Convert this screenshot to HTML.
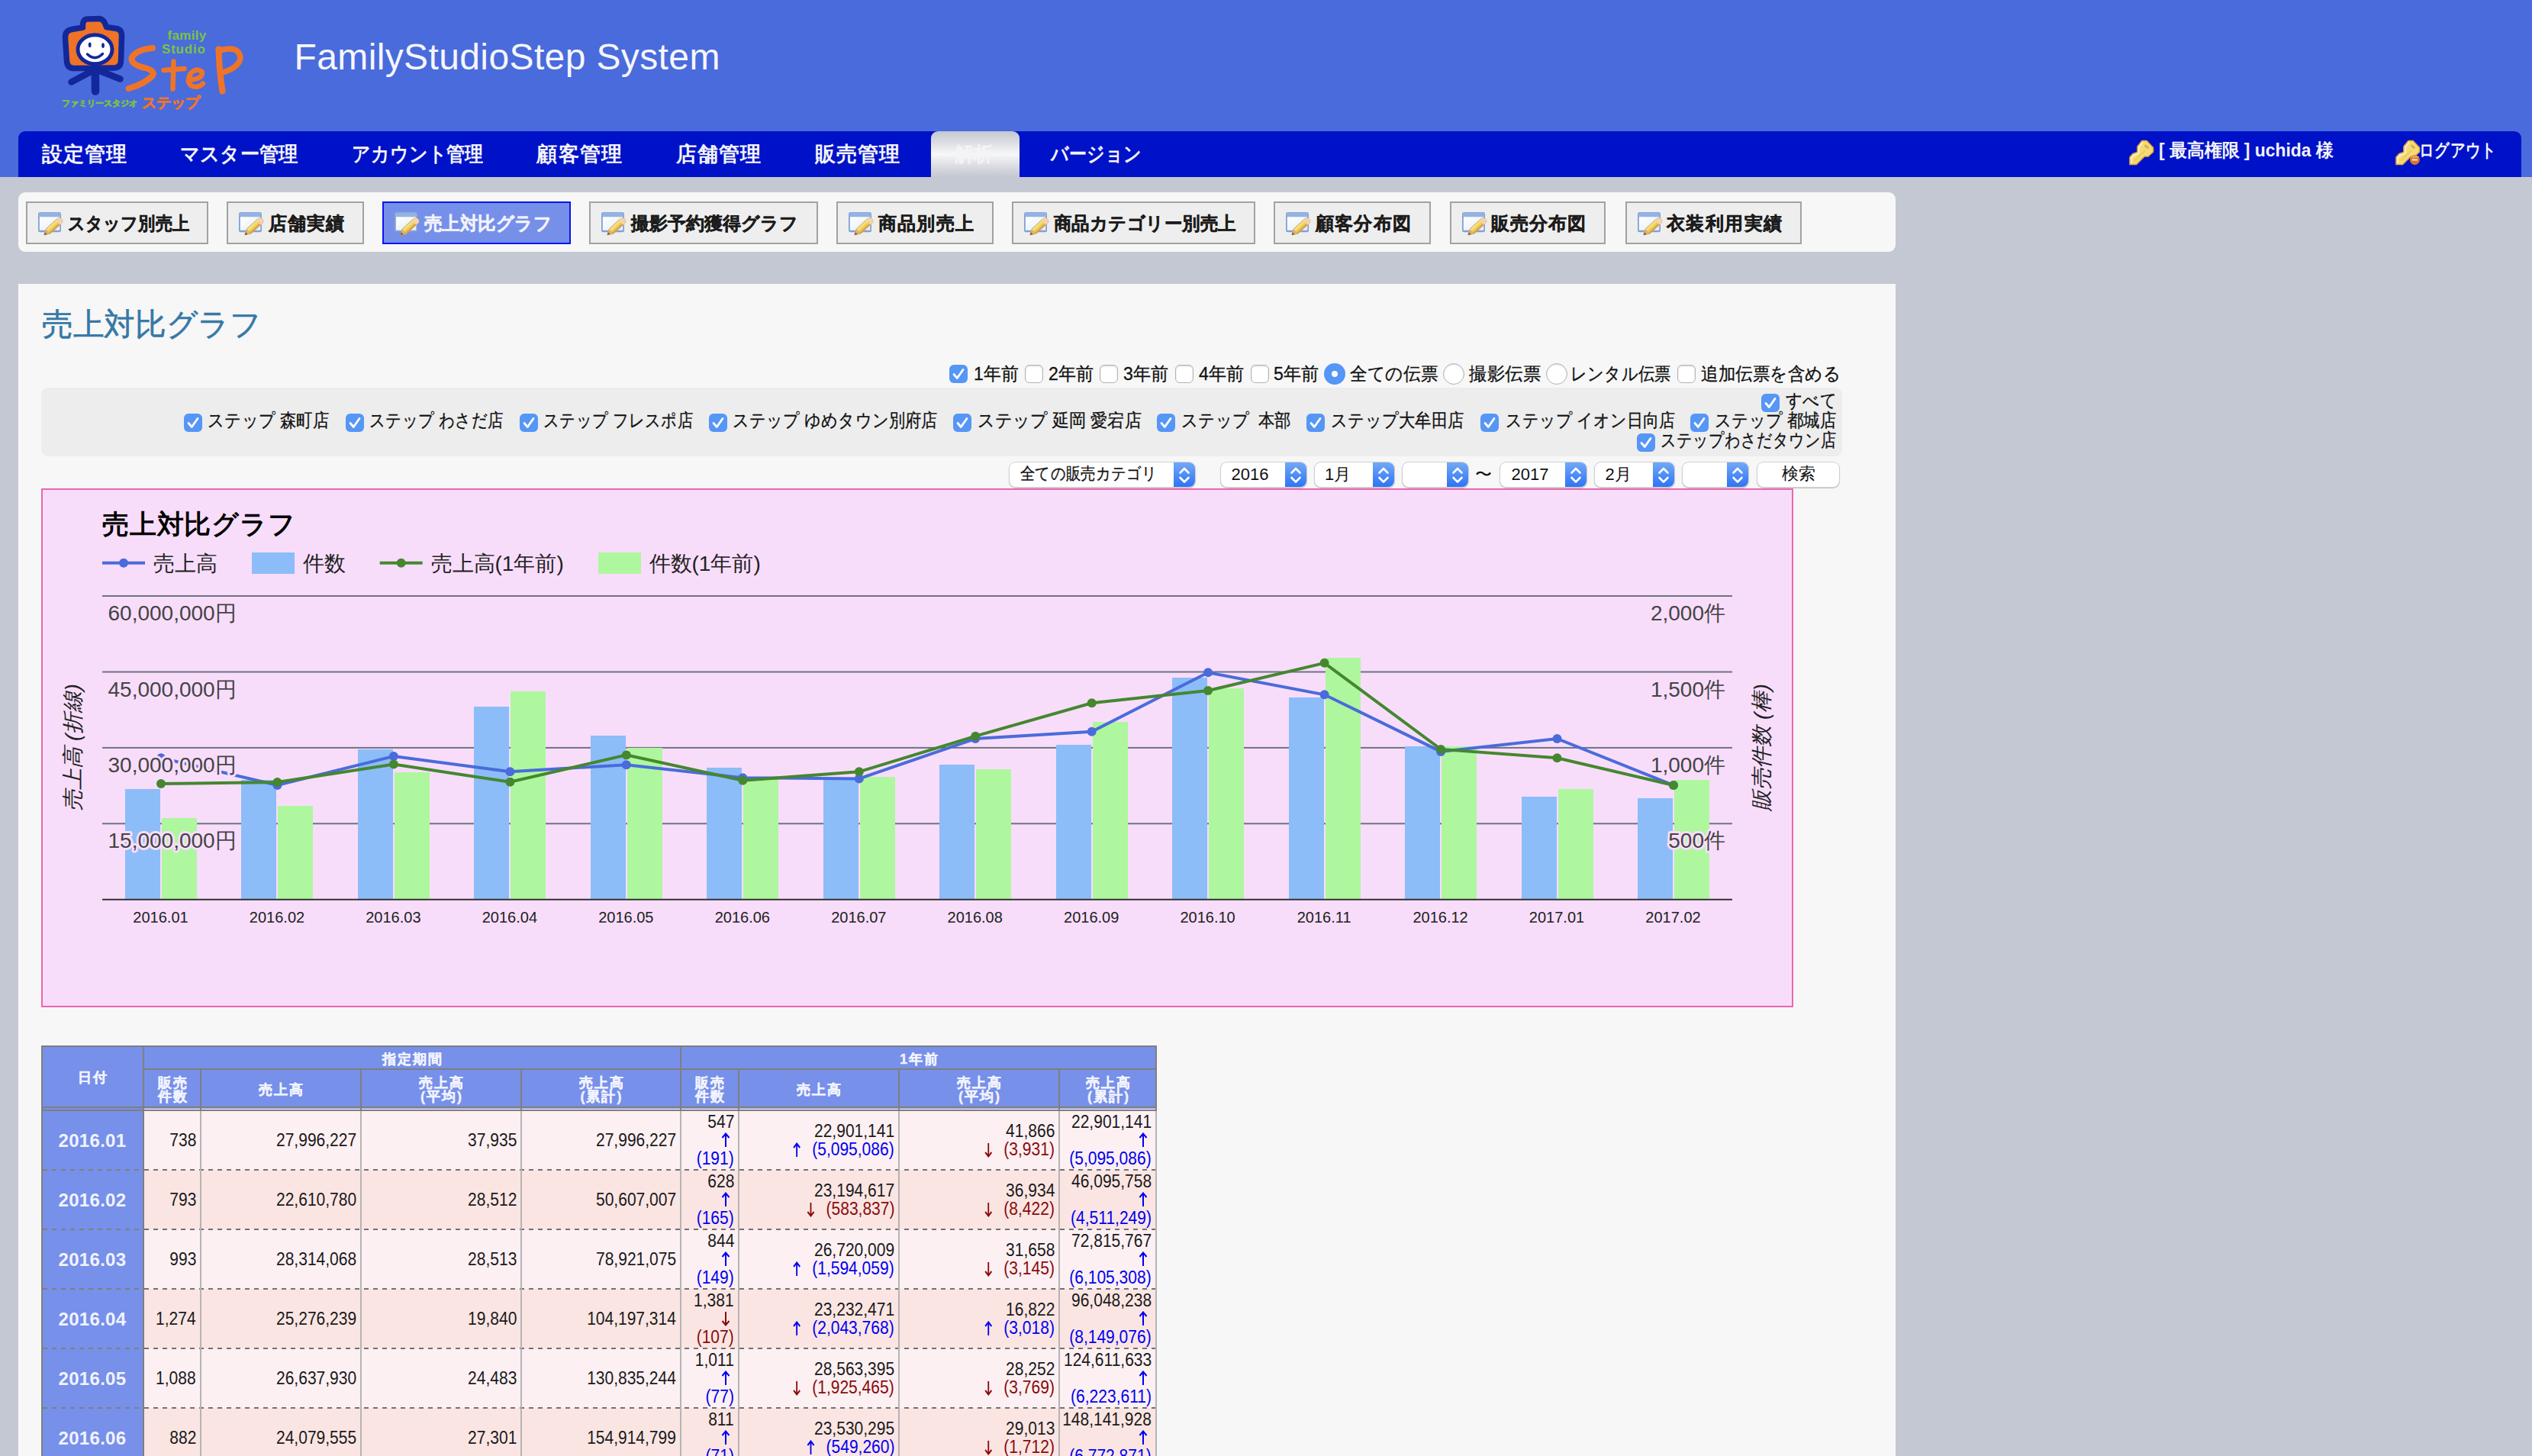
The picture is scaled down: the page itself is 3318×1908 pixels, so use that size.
<!DOCTYPE html>
<html lang="ja"><head><meta charset="utf-8"><title>FamilyStudioStep System</title>
<style>
html,body{margin:0;padding:0}
body{width:3318px;height:1908px;overflow:hidden;background:#c4c8d2;font-family:"Liberation Sans",sans-serif;position:relative}
.t{position:absolute;white-space:nowrap;margin:0;padding:0}
.a{position:absolute}
#hd{left:0;top:0;width:3318px;height:232px;background:#4a6bdc}
#nav{left:24px;top:172px;width:3280px;height:60px;background:#0012c8;border-radius:9px 9px 0 0}
#tab{left:1220px;top:172px;width:116px;height:60px;border-radius:9px 9px 0 0;background:linear-gradient(#c4c8d2 0%,#d9dbe1 22%,#f7f7f7 50%,#d9dbe1 78%,#c4c8d2 100%)}
#sub{left:24px;top:252px;width:2460px;height:78px;background:#f7f7f7;border-radius:9px}
#main{left:24px;top:372px;width:2460px;height:1600px;background:#f7f7f7}
.btn{position:absolute;top:264px;height:52px;box-sizing:content-box;border:2px solid #a2a2a2;background:#eee}
.btn.on{border-color:#0a14f0;background:#7690ea}
.cb{position:absolute;width:24px;height:24px;border-radius:6px;box-sizing:border-box}
.cb.y{background:#5596f6}
.cb.n{background:#fff;border:1px solid #b4b4b4;box-shadow:inset 0 1px 2px rgba(0,0,0,.18)}
.rd{position:absolute;width:28px;height:28px;border-radius:14px;box-sizing:border-box}
.rd.n{background:#fff;border:1px solid #b4b4b4;box-shadow:inset 0 1px 2px rgba(0,0,0,.15)}
.rd.y{background:#5596f6}
.sel{position:absolute;top:605.6px;height:32.8px;border-radius:8px;background:#fff;box-shadow:0 0 0 1px #d0d0d0,0 1px 1px 1px #c4c4c4;overflow:hidden}
.sel i{position:absolute;right:0;top:0;width:28px;height:33px;background:linear-gradient(#72a9f6,#2c72f5)}
#stores{left:54px;top:508px;width:2360px;height:90px;background:#ededed;border-radius:9px}
#chart{left:54px;top:640px;width:2292px;height:676px;border:2px solid #ec66ac;background:#f8ddfb}
</style></head><body>
<div class="a" id="hd"></div>

<svg class="a" style="left:70px;top:10px" width="270" height="145" viewBox="70 10 270 145">
<g fill="none" stroke-linecap="round" stroke-linejoin="round">
<path d="M124.8 90 L125 119.5" stroke="#12279a" stroke-width="10.5"/>
<path d="M119 94 L93.5 107.5" stroke="#12279a" stroke-width="8.5"/>
<path d="M131 93 L157.5 103.5" stroke="#12279a" stroke-width="8.5"/>
<path d="M108.5 36 Q108 25.5 114 25 L131 24.5 Q136 25 139.5 35.5 L153 37.5 Q160 39 159.5 48 L158.5 80 Q158 89.5 148 89 L98 89.5 Q88 90 87.5 80 L85.5 50 Q85 40 94 38.5 Z" fill="#ee7326" stroke="#12279a" stroke-width="7.5"/>
<ellipse cx="124.5" cy="64.8" rx="22.5" ry="19" fill="#fff" stroke="#12279a" stroke-width="5"/>
<path d="M114.5 71 Q124.5 80.5 134.5 70.5" stroke="#12279a" stroke-width="3.4"/>
</g>
<ellipse cx="117.7" cy="58.8" rx="1.9" ry="3.4" fill="#12279a"/><ellipse cx="135" cy="59.6" rx="1.9" ry="3.4" fill="#12279a"/>
<g fill="none" stroke="#f07428" stroke-linecap="round" stroke-linejoin="round">
<path d="M200 63 Q178 65 172.5 76 Q172 85 190 89 Q204 93 200 99 Q190 110 168.5 116" stroke-width="8"/>
<path d="M227.5 80.5 L226.5 116.5" stroke-width="6.5"/><path d="M214.5 92 L241.5 90" stroke-width="6.5"/>
<path d="M250 104.5 Q266 103 265 94.5 Q258 88 250 96 Q243 108 252 113 Q260 115.5 266 109.500" stroke-width="6.5"/>
<path d="M286.5 64.500 Q287.5 95 291.5 119.500" stroke-width="8"/><path d="M286.500 66.500 Q312 58.500 315 75 Q314 88.500 291.500 95" stroke-width="7.500"/>
</g>
</svg>
<div class="t" style="top:37.7px;font-size:17px;line-height:17px;color:#7cc244;font-weight:bold;left:219.5px;letter-spacing:0.3px">family</div>
<div class="t" style="top:55.7px;font-size:17px;line-height:17px;color:#7cc244;font-weight:bold;left:212.0px;letter-spacing:0.8px">Studio</div>
<div class="t" style="top:129.7px;font-size:11.2px;line-height:11.2px;color:#7cc244;font-weight:bold;left:81.0px;-webkit-text-stroke:0.5px #7cc244;">ファミリースタジオ</div>
<div class="t" style="top:125.1px;font-size:19px;line-height:19px;color:#f07428;font-weight:bold;left:186.0px;-webkit-text-stroke:0.7px #f07428;">ステップ</div>
<div class="t" style="top:50.8px;font-size:48px;line-height:48px;color:#f6f6fa;left:385.5px;letter-spacing:0.38px">FamilyStudioStep System</div>
<div class="a" id="nav"></div><div class="a" id="tab"></div>
<div class="t" style="top:189.3px;font-size:27px;line-height:27px;color:#f4f4f8;font-weight:bold;left:54.5px;letter-spacing:1.13px;">設定管理</div>
<div class="t" style="top:189.3px;font-size:27px;line-height:27px;color:#f4f4f8;font-weight:bold;left:235.5px;transform:scaleX(0.9364);transform-origin:0 50%;">マスター管理</div>
<div class="t" style="top:189.3px;font-size:27px;line-height:27px;color:#f4f4f8;font-weight:bold;left:460.7px;transform:scaleX(0.8892);transform-origin:0 50%;">アカウント管理</div>
<div class="t" style="top:189.3px;font-size:27px;line-height:27px;color:#f4f4f8;font-weight:bold;left:703.3px;letter-spacing:1.30px;">顧客管理</div>
<div class="t" style="top:189.3px;font-size:27px;line-height:27px;color:#f4f4f8;font-weight:bold;left:886.3px;letter-spacing:0.97px;">店舗管理</div>
<div class="t" style="top:189.3px;font-size:27px;line-height:27px;color:#f4f4f8;font-weight:bold;left:1068.2px;letter-spacing:0.97px;">販売管理</div>
<div class="t" style="top:189.3px;font-size:27px;line-height:27px;color:#f4f4f8;font-weight:bold;left:1251.2px;transform:scaleX(0.9315);transform-origin:0 50%;">解析</div>
<div class="t" style="top:189.3px;font-size:27px;line-height:27px;color:#f4f4f8;font-weight:bold;left:1377.3px;transform:scaleX(0.8554);transform-origin:0 50%;">バージョン</div>
<svg class="a" style="left:2789px;top:183px" width="36" height="36" viewBox="0 0 36 36"><path d="M18 1.500 L24 1.500 L32.500 10.500 L32.500 16 L26 22 L21 22 L10.500 32.500 L2 32.500 L2 23 L6 18.500 L12 16.500 L12 9 Z" fill="#f2dc78" stroke="#e6a93a" stroke-width="1.600" stroke-linejoin="round"/><path d="M4 30.500 L4 24 L7.500 20.500 L13.500 18 L14 10 L19 3.500" fill="none" stroke="#fbf3cc" stroke-width="1.800" stroke-linejoin="round"/><path d="M8 28 L22 14" stroke="#ecd060" stroke-width="3"/><ellipse cx="24" cy="9.300" rx="3.600" ry="1.700" transform="rotate(38 24 9.300)" fill="#dcae58"/></svg>
<div class="t" style="top:185.0px;font-size:24px;line-height:24px;color:#f4f4f8;font-weight:bold;left:2829.0px;transform:scaleX(0.9529);transform-origin:0 50%;">[ 最高権限 ] uchida 様</div>
<svg class="a" style="left:3138px;top:183px" width="36" height="36" viewBox="0 0 36 36"><path d="M18 1.500 L24 1.500 L32.500 10.500 L32.500 16 L26 22 L21 22 L10.500 32.500 L2 32.500 L2 23 L6 18.500 L12 16.500 L12 9 Z" fill="#f2dc78" stroke="#e6a93a" stroke-width="1.600" stroke-linejoin="round"/><path d="M4 30.500 L4 24 L7.500 20.500 L13.500 18 L14 10 L19 3.500" fill="none" stroke="#fbf3cc" stroke-width="1.800" stroke-linejoin="round"/><path d="M8 28 L22 14" stroke="#ecd060" stroke-width="3"/><ellipse cx="24" cy="9.300" rx="3.600" ry="1.700" transform="rotate(38 24 9.300)" fill="#dcae58"/><circle cx="26.400" cy="26.400" r="6.500" fill="#dc7226"/><path d="M20.600 24 A6.500 6.500 0 0 1 32.200 24 Z" fill="#ee9a5e"/><rect x="22.800" y="25.500" width="7.200" height="1.900" fill="#fdeee0"/></svg>
<div class="t" style="top:184.5px;font-size:24px;line-height:24px;color:#f4f4f8;font-weight:bold;left:3170.0px;transform:scaleX(0.8136);transform-origin:0 50%;">ログアウト</div>
<div class="a" id="sub"></div>
<svg width="0" height="0" style="position:absolute"><defs><linearGradient id="wg" x1="0" y1="0" x2="1" y2="1"><stop offset="0" stop-color="#fff"/><stop offset="1" stop-color="#e3edf9"/></linearGradient><linearGradient id="pg" gradientUnits="userSpaceOnUse" x1="13" y1="20" x2="19.500" y2="27"><stop offset="0" stop-color="#dcae62"/><stop offset=".3" stop-color="#f4e48a"/><stop offset=".65" stop-color="#f0d455"/><stop offset="1" stop-color="#d29c4c"/></linearGradient><g id="ed"><rect x="1" y="2" width="30" height="26.300" rx="2.500" fill="#7fa0d8"/><rect x="1.800" y="2.600" width="28.400" height="5.400" rx="1.500" fill="#93b3e3"/><rect x="2.800" y="8.200" width="26.500" height="17.600" fill="url(#wg)"/><path d="M8.800 31.900 L11.200 24 L26 10.500 Q29.500 8.300 32.200 11.500 Q34.200 14.500 31.600 16.700 L16.900 30.200 Z" fill="url(#pg)" stroke="#d4a456" stroke-width="1"/><path d="M26 10.500 Q29.500 8.300 32.200 11.500 Q34.200 14.500 31.600 16.700 L29.400 18.700 L23.800 12.500 Z" fill="#f3d3ae"/><path d="M8.800 31.900 L11.200 24 L16.900 30.200 Z" fill="#d9b27a"/><path d="M8.800 31.900 L9.900 28.200 L12.600 31 Z" fill="#7a5a28"/></g></defs></svg>
<div class="btn" style="left:34px;width:235px"></div>
<svg class="a" style="left:49px;top:276px" width="36" height="36" viewBox="0 0 36 36"><use href="#ed"/></svg>
<div class="t" style="top:280.5px;font-size:24px;line-height:24px;color:#1c1c1c;font-weight:bold;left:88.5px;transform:scaleX(0.9244);transform-origin:0 50%;-webkit-text-stroke:0.45px;">スタッフ別売上</div>
<div class="btn" style="left:297px;width:176px"></div>
<svg class="a" style="left:312px;top:276px" width="36" height="36" viewBox="0 0 36 36"><use href="#ed"/></svg>
<div class="t" style="top:280.5px;font-size:24px;line-height:24px;color:#1c1c1c;font-weight:bold;left:351.5px;letter-spacing:1.33px;-webkit-text-stroke:0.45px;">店舗実績</div>
<div class="btn on" style="left:501px;width:243px"></div>
<svg class="a" style="left:516px;top:276px" width="36" height="36" viewBox="0 0 36 36"><use href="#ed"/></svg>
<div class="t" style="top:280.5px;font-size:24px;line-height:24px;color:#f2f2fa;font-weight:bold;left:555.5px;transform:scaleX(0.9766);transform-origin:0 50%;-webkit-text-stroke:0.45px;">売上対比グラフ</div>
<div class="btn" style="left:772px;width:296px"></div>
<svg class="a" style="left:787px;top:276px" width="36" height="36" viewBox="0 0 36 36"><use href="#ed"/></svg>
<div class="t" style="top:280.5px;font-size:24px;line-height:24px;color:#1c1c1c;font-weight:bold;left:826.5px;letter-spacing:0.12px;-webkit-text-stroke:0.45px;">撮影予約獲得グラフ</div>
<div class="btn" style="left:1096px;width:201.5px"></div>
<svg class="a" style="left:1111px;top:276px" width="36" height="36" viewBox="0 0 36 36"><use href="#ed"/></svg>
<div class="t" style="top:280.5px;font-size:24px;line-height:24px;color:#1c1c1c;font-weight:bold;left:1150.5px;letter-spacing:1.38px;-webkit-text-stroke:0.45px;">商品別売上</div>
<div class="btn" style="left:1326px;width:314.5px"></div>
<svg class="a" style="left:1341px;top:276px" width="36" height="36" viewBox="0 0 36 36"><use href="#ed"/></svg>
<div class="t" style="top:280.5px;font-size:24px;line-height:24px;color:#1c1c1c;font-weight:bold;left:1380.5px;transform:scaleX(0.9775);transform-origin:0 50%;-webkit-text-stroke:0.45px;">商品カテゴリー別売上</div>
<div class="btn" style="left:1669px;width:201.5px"></div>
<svg class="a" style="left:1684px;top:276px" width="36" height="36" viewBox="0 0 36 36"><use href="#ed"/></svg>
<div class="t" style="top:280.5px;font-size:24px;line-height:24px;color:#1c1c1c;font-weight:bold;left:1723.5px;letter-spacing:1.38px;-webkit-text-stroke:0.45px;">顧客分布図</div>
<div class="btn" style="left:1899.5px;width:200.5px"></div>
<svg class="a" style="left:1914.5px;top:276px" width="36" height="36" viewBox="0 0 36 36"><use href="#ed"/></svg>
<div class="t" style="top:280.5px;font-size:24px;line-height:24px;color:#1c1c1c;font-weight:bold;left:1954.0px;letter-spacing:1.12px;-webkit-text-stroke:0.45px;">販売分布図</div>
<div class="btn" style="left:2129.5px;width:227.0px"></div>
<svg class="a" style="left:2144.5px;top:276px" width="36" height="36" viewBox="0 0 36 36"><use href="#ed"/></svg>
<div class="t" style="top:280.5px;font-size:24px;line-height:24px;color:#1c1c1c;font-weight:bold;left:2184.0px;letter-spacing:1.40px;-webkit-text-stroke:0.45px;">衣装利用実績</div>
<div class="a" id="main"></div>
<div class="t" style="top:404.7px;font-size:41px;line-height:41px;color:#3678a6;left:55.0px;transform:scaleX(0.9917);transform-origin:0 50%;-webkit-text-stroke:0.6px;">売上対比グラフ</div>
<div class="cb y" style="left:1244.0px;top:478.0px"><svg width="24" height="24" viewBox="0 0 24 24" style="display:block"><path d="M6 12.5 L10.3 17.5 L18 6.5" fill="none" stroke="#fff" stroke-width="2.8" stroke-linecap="round" stroke-linejoin="round"/></svg></div>
<div class="t" style="top:477.5px;font-size:24px;line-height:24px;color:#111;left:1276.0px;transform:scaleX(0.9534);transform-origin:0 50%;-webkit-text-stroke:0.3px;">1年前</div>
<div class="cb n" style="left:1342.7px;top:478.0px"></div>
<div class="t" style="top:477.5px;font-size:24px;line-height:24px;color:#111;left:1373.5px;transform:scaleX(0.9615);transform-origin:0 50%;-webkit-text-stroke:0.3px;">2年前</div>
<div class="cb n" style="left:1441.3px;top:478.0px"></div>
<div class="t" style="top:477.5px;font-size:24px;line-height:24px;color:#111;left:1472.0px;transform:scaleX(0.9615);transform-origin:0 50%;-webkit-text-stroke:0.3px;">3年前</div>
<div class="cb n" style="left:1540.3px;top:478.0px"></div>
<div class="t" style="top:477.5px;font-size:24px;line-height:24px;color:#111;left:1570.6px;transform:scaleX(0.9632);transform-origin:0 50%;-webkit-text-stroke:0.3px;">4年前</div>
<div class="cb n" style="left:1638.9px;top:478.0px"></div>
<div class="t" style="top:477.5px;font-size:24px;line-height:24px;color:#111;left:1669.2px;transform:scaleX(0.9615);transform-origin:0 50%;-webkit-text-stroke:0.3px;">5年前</div>
<div class="rd y" style="left:1735.0px;top:476.0px"><div class="a" style="left:10px;top:10px;width:8px;height:8px;border-radius:4px;background:#fff"></div></div>
<div class="t" style="top:477.5px;font-size:24px;line-height:24px;color:#111;left:1768.8px;transform:scaleX(0.9467);transform-origin:0 50%;-webkit-text-stroke:0.3px;">全ての伝票</div>
<div class="rd n" style="left:1891.0px;top:476.0px"></div>
<div class="t" style="top:477.5px;font-size:24px;line-height:24px;color:#111;left:1924.8px;transform:scaleX(0.9792);transform-origin:0 50%;-webkit-text-stroke:0.3px;">撮影伝票</div>
<div class="rd n" style="left:2026.0px;top:476.0px"></div>
<div class="t" style="top:477.5px;font-size:24px;line-height:24px;color:#111;left:2058.3px;transform:scaleX(0.8878);transform-origin:0 50%;-webkit-text-stroke:0.3px;">レンタル伝票</div>
<div class="cb n" style="left:2198.0px;top:478.0px"></div>
<div class="t" style="top:477.5px;font-size:24px;line-height:24px;color:#111;left:2229.3px;transform:scaleX(0.9395);transform-origin:0 50%;-webkit-text-stroke:0.3px;">追加伝票を含める</div>
<div class="a" id="stores"></div>
<div class="cb y" style="left:2308.2px;top:516.0px"><svg width="24" height="24" viewBox="0 0 24 24" style="display:block"><path d="M6 12.5 L10.3 17.5 L18 6.5" fill="none" stroke="#fff" stroke-width="2.8" stroke-linecap="round" stroke-linejoin="round"/></svg></div>
<div class="t" style="top:512.7px;font-size:24px;line-height:24px;color:#111;left:2339.6px;transform:scaleX(0.8907);transform-origin:0 50%;-webkit-text-stroke:0.3px;">すべて</div>
<div class="cb y" style="left:240.8px;top:541.5px"><svg width="24" height="24" viewBox="0 0 24 24" style="display:block"><path d="M6 12.5 L10.3 17.5 L18 6.5" fill="none" stroke="#fff" stroke-width="2.8" stroke-linecap="round" stroke-linejoin="round"/></svg></div>
<div class="t" style="top:539.1px;font-size:24px;line-height:24px;color:#111;left:272.0px;transform:scaleX(0.8910);transform-origin:0 50%;-webkit-text-stroke:0.3px;">ステップ 森町店</div>
<div class="cb y" style="left:452.8px;top:541.5px"><svg width="24" height="24" viewBox="0 0 24 24" style="display:block"><path d="M6 12.5 L10.3 17.5 L18 6.5" fill="none" stroke="#fff" stroke-width="2.8" stroke-linecap="round" stroke-linejoin="round"/></svg></div>
<div class="t" style="top:539.1px;font-size:24px;line-height:24px;color:#111;left:484.0px;transform:scaleX(0.8543);transform-origin:0 50%;-webkit-text-stroke:0.3px;">ステップ わさだ店</div>
<div class="cb y" style="left:680.7px;top:541.5px"><svg width="24" height="24" viewBox="0 0 24 24" style="display:block"><path d="M6 12.5 L10.3 17.5 L18 6.5" fill="none" stroke="#fff" stroke-width="2.8" stroke-linecap="round" stroke-linejoin="round"/></svg></div>
<div class="t" style="top:539.1px;font-size:24px;line-height:24px;color:#111;left:711.5px;transform:scaleX(0.8501);transform-origin:0 50%;-webkit-text-stroke:0.3px;">ステップ フレスポ店</div>
<div class="cb y" style="left:928.6px;top:541.5px"><svg width="24" height="24" viewBox="0 0 24 24" style="display:block"><path d="M6 12.5 L10.3 17.5 L18 6.5" fill="none" stroke="#fff" stroke-width="2.8" stroke-linecap="round" stroke-linejoin="round"/></svg></div>
<div class="t" style="top:539.1px;font-size:24px;line-height:24px;color:#111;left:960.0px;transform:scaleX(0.8838);transform-origin:0 50%;-webkit-text-stroke:0.3px;">ステップ ゆめタウン別府店</div>
<div class="cb y" style="left:1248.8px;top:541.5px"><svg width="24" height="24" viewBox="0 0 24 24" style="display:block"><path d="M6 12.5 L10.3 17.5 L18 6.5" fill="none" stroke="#fff" stroke-width="2.8" stroke-linecap="round" stroke-linejoin="round"/></svg></div>
<div class="t" style="top:539.1px;font-size:24px;line-height:24px;color:#111;left:1280.6px;transform:scaleX(0.9197);transform-origin:0 50%;-webkit-text-stroke:0.3px;">ステップ 延岡 愛宕店</div>
<div class="cb y" style="left:1515.7px;top:541.5px"><svg width="24" height="24" viewBox="0 0 24 24" style="display:block"><path d="M6 12.5 L10.3 17.5 L18 6.5" fill="none" stroke="#fff" stroke-width="2.8" stroke-linecap="round" stroke-linejoin="round"/></svg></div>
<div class="t" style="top:539.1px;font-size:24px;line-height:24px;color:#111;left:1548.0px;transform:scaleX(0.8913);transform-origin:0 50%;-webkit-text-stroke:0.3px;">ステップ &nbsp;本部</div>
<div class="cb y" style="left:1712.3px;top:541.5px"><svg width="24" height="24" viewBox="0 0 24 24" style="display:block"><path d="M6 12.5 L10.3 17.5 L18 6.5" fill="none" stroke="#fff" stroke-width="2.8" stroke-linecap="round" stroke-linejoin="round"/></svg></div>
<div class="t" style="top:539.1px;font-size:24px;line-height:24px;color:#111;left:1744.1px;transform:scaleX(0.8908);transform-origin:0 50%;-webkit-text-stroke:0.3px;">ステップ大牟田店</div>
<div class="cb y" style="left:1940.2px;top:541.5px"><svg width="24" height="24" viewBox="0 0 24 24" style="display:block"><path d="M6 12.5 L10.3 17.5 L18 6.5" fill="none" stroke="#fff" stroke-width="2.8" stroke-linecap="round" stroke-linejoin="round"/></svg></div>
<div class="t" style="top:539.1px;font-size:24px;line-height:24px;color:#111;left:1972.6px;transform:scaleX(0.8744);transform-origin:0 50%;-webkit-text-stroke:0.3px;">ステップ イオン日向店</div>
<div class="cb y" style="left:2215.4px;top:541.5px"><svg width="24" height="24" viewBox="0 0 24 24" style="display:block"><path d="M6 12.5 L10.3 17.5 L18 6.5" fill="none" stroke="#fff" stroke-width="2.8" stroke-linecap="round" stroke-linejoin="round"/></svg></div>
<div class="t" style="top:539.1px;font-size:24px;line-height:24px;color:#111;left:2247.2px;transform:scaleX(0.8910);transform-origin:0 50%;-webkit-text-stroke:0.3px;">ステップ 都城店</div>
<div class="cb y" style="left:2144.6px;top:568.0px"><svg width="24" height="24" viewBox="0 0 24 24" style="display:block"><path d="M6 12.5 L10.3 17.5 L18 6.5" fill="none" stroke="#fff" stroke-width="2.8" stroke-linecap="round" stroke-linejoin="round"/></svg></div>
<div class="t" style="top:564.8px;font-size:24px;line-height:24px;color:#111;left:2176.4px;transform:scaleX(0.8394);transform-origin:0 50%;-webkit-text-stroke:0.3px;">ステップわさだタウン店</div>
<div class="sel" style="left:1322.5px;width:243.0px"><i></i><svg class="a" style="right:0;top:0" width="28" height="33" viewBox="0 0 28 33"><path d="M8.5 13.5 L14 8 L19.5 13.5 M8.5 20 L14 25.5 L19.5 20" fill="none" stroke="#fff" stroke-width="2.6" stroke-linecap="round" stroke-linejoin="round"/></svg></div>
<div class="t" style="top:610.1px;font-size:22px;line-height:22px;color:#111;left:1337.0px;transform:scaleX(0.8799);transform-origin:0 50%;-webkit-text-stroke:0.3px;">全ての販売カテゴリ</div>
<div class="sel" style="left:1599.5px;width:112.8px"><i></i><svg class="a" style="right:0;top:0" width="28" height="33" viewBox="0 0 28 33"><path d="M8.5 13.5 L14 8 L19.5 13.5 M8.5 20 L14 25.5 L19.5 20" fill="none" stroke="#fff" stroke-width="2.6" stroke-linecap="round" stroke-linejoin="round"/></svg></div>
<div class="t" style="top:610.6px;font-size:22px;line-height:22px;color:#111;left:1613.5px;">2016</div>
<div class="sel" style="left:1722.6px;width:104.7px"><i></i><svg class="a" style="right:0;top:0" width="28" height="33" viewBox="0 0 28 33"><path d="M8.5 13.5 L14 8 L19.5 13.5 M8.5 20 L14 25.5 L19.5 20" fill="none" stroke="#fff" stroke-width="2.6" stroke-linecap="round" stroke-linejoin="round"/></svg></div>
<div class="t" style="top:610.6px;font-size:22px;line-height:22px;color:#111;left:1736.0px;">1月</div>
<div class="sel" style="left:1837.6px;width:86.7px"><i></i><svg class="a" style="right:0;top:0" width="28" height="33" viewBox="0 0 28 33"><path d="M8.5 13.5 L14 8 L19.5 13.5 M8.5 20 L14 25.5 L19.5 20" fill="none" stroke="#fff" stroke-width="2.6" stroke-linecap="round" stroke-linejoin="round"/></svg></div>
<div class="t" style="top:610.6px;font-size:22px;line-height:22px;color:#111;left:1933.0px;">〜</div>
<div class="sel" style="left:1966.4px;width:113.0px"><i></i><svg class="a" style="right:0;top:0" width="28" height="33" viewBox="0 0 28 33"><path d="M8.5 13.5 L14 8 L19.5 13.5 M8.5 20 L14 25.5 L19.5 20" fill="none" stroke="#fff" stroke-width="2.6" stroke-linecap="round" stroke-linejoin="round"/></svg></div>
<div class="t" style="top:610.6px;font-size:22px;line-height:22px;color:#111;left:1980.5px;">2017</div>
<div class="sel" style="left:2089.6px;width:104.8px"><i></i><svg class="a" style="right:0;top:0" width="28" height="33" viewBox="0 0 28 33"><path d="M8.5 13.5 L14 8 L19.5 13.5 M8.5 20 L14 25.5 L19.5 20" fill="none" stroke="#fff" stroke-width="2.6" stroke-linecap="round" stroke-linejoin="round"/></svg></div>
<div class="t" style="top:610.6px;font-size:22px;line-height:22px;color:#111;left:2103.5px;">2月</div>
<div class="sel" style="left:2204.6px;width:86.8px"><i></i><svg class="a" style="right:0;top:0" width="28" height="33" viewBox="0 0 28 33"><path d="M8.5 13.5 L14 8 L19.5 13.5 M8.5 20 L14 25.5 L19.5 20" fill="none" stroke="#fff" stroke-width="2.6" stroke-linecap="round" stroke-linejoin="round"/></svg></div>
<div class="a" style="left:2302.5px;top:605.6px;width:107.5px;height:32.8px;border-radius:8px;background:#fff;box-shadow:0 0 0 1px #d0d0d0,0 1px 1px 1px #c4c4c4"></div>
<div class="t" style="top:610.1px;font-size:22px;line-height:22px;color:#111;left:2306.5px;width:100px;text-align:center;">検索</div>
<div class="a" id="chart"></div>
<svg class="a" style="left:56px;top:642px" width="2292" height="676" viewBox="56 642 2292 676" font-family="Liberation Sans, sans-serif">
<rect x="134.0" y="780.0" width="2136.0" height="2" fill="#6d7480"/>
<rect x="134.0" y="879.5" width="2136.0" height="2" fill="#6d7480"/>
<rect x="134.0" y="978.9" width="2136.0" height="2" fill="#6d7480"/>
<rect x="134.0" y="1078.3" width="2136.0" height="2" fill="#6d7480"/>
<rect x="164" y="1034" width="46" height="144.8" fill="#8cbdf8"/>
<rect x="212" y="1072" width="46" height="106.8" fill="#aef79e"/>
<rect x="316" y="1022" width="46" height="156.8" fill="#8cbdf8"/>
<rect x="364" y="1056" width="46" height="122.8" fill="#aef79e"/>
<rect x="469" y="982" width="46" height="196.8" fill="#8cbdf8"/>
<rect x="517" y="1012" width="46" height="166.8" fill="#aef79e"/>
<rect x="621" y="926" width="46" height="252.8" fill="#8cbdf8"/>
<rect x="669" y="906" width="46" height="272.8" fill="#aef79e"/>
<rect x="774" y="964" width="46" height="214.8" fill="#8cbdf8"/>
<rect x="822" y="980" width="46" height="198.8" fill="#aef79e"/>
<rect x="926" y="1006" width="46" height="172.8" fill="#8cbdf8"/>
<rect x="974" y="1020" width="46" height="158.8" fill="#aef79e"/>
<rect x="1079" y="1021" width="46" height="157.8" fill="#8cbdf8"/>
<rect x="1127" y="1018" width="46" height="160.8" fill="#aef79e"/>
<rect x="1231" y="1002" width="46" height="176.8" fill="#8cbdf8"/>
<rect x="1279" y="1008" width="46" height="170.8" fill="#aef79e"/>
<rect x="1384" y="976" width="46" height="202.8" fill="#8cbdf8"/>
<rect x="1432" y="946" width="46" height="232.8" fill="#aef79e"/>
<rect x="1536" y="888" width="46" height="290.8" fill="#8cbdf8"/>
<rect x="1584" y="902" width="46" height="276.8" fill="#aef79e"/>
<rect x="1689" y="914" width="46" height="264.8" fill="#8cbdf8"/>
<rect x="1737" y="862" width="46" height="316.8" fill="#aef79e"/>
<rect x="1841" y="978" width="46" height="200.8" fill="#8cbdf8"/>
<rect x="1889" y="978" width="46" height="200.8" fill="#aef79e"/>
<rect x="1994" y="1044" width="46" height="134.8" fill="#8cbdf8"/>
<rect x="2042" y="1034" width="46" height="144.8" fill="#aef79e"/>
<rect x="2146" y="1046" width="46" height="132.8" fill="#8cbdf8"/>
<rect x="2194" y="1022" width="46" height="156.8" fill="#aef79e"/>
<rect x="134.0" y="1177.8" width="2136.0" height="2" fill="#333"/>
<polyline fill="none" stroke="#4a6bdb" stroke-width="4" points="211.0,993.2 363.5,1028.9 515.9,991.1 668.4,1011.2 820.8,1002.2 973.3,1019.2 1125.8,1020.4 1278.2,968.0 1430.7,958.7 1583.1,881.3 1735.6,910.3 1888.1,984.9 2040.5,968.0 2193.0,1029.0"/>
<circle cx="211.0" cy="993.2" r="6" fill="#4a6bdb"/>
<circle cx="363.5" cy="1028.9" r="6" fill="#4a6bdb"/>
<circle cx="515.9" cy="991.1" r="6" fill="#4a6bdb"/>
<circle cx="668.4" cy="1011.2" r="6" fill="#4a6bdb"/>
<circle cx="820.8" cy="1002.2" r="6" fill="#4a6bdb"/>
<circle cx="973.3" cy="1019.2" r="6" fill="#4a6bdb"/>
<circle cx="1125.8" cy="1020.4" r="6" fill="#4a6bdb"/>
<circle cx="1278.2" cy="968.0" r="6" fill="#4a6bdb"/>
<circle cx="1430.7" cy="958.7" r="6" fill="#4a6bdb"/>
<circle cx="1583.1" cy="881.3" r="6" fill="#4a6bdb"/>
<circle cx="1735.6" cy="910.3" r="6" fill="#4a6bdb"/>
<circle cx="1888.1" cy="984.9" r="6" fill="#4a6bdb"/>
<circle cx="2040.5" cy="968.0" r="6" fill="#4a6bdb"/>
<circle cx="2193.0" cy="1029.0" r="6" fill="#4a6bdb"/>
<polyline fill="none" stroke="#45872f" stroke-width="4" points="211.0,1027.0 363.5,1025.0 515.9,1001.6 668.4,1024.8 820.8,989.4 973.3,1022.8 1125.8,1011.3 1278.2,964.7 1430.7,921.3 1583.1,905.0 1735.6,868.8 1888.1,981.9 2040.5,993.2 2193.0,1029.0"/>
<circle cx="211.0" cy="1027.0" r="6" fill="#45872f"/>
<circle cx="363.5" cy="1025.0" r="6" fill="#45872f"/>
<circle cx="515.9" cy="1001.6" r="6" fill="#45872f"/>
<circle cx="668.4" cy="1024.8" r="6" fill="#45872f"/>
<circle cx="820.8" cy="989.4" r="6" fill="#45872f"/>
<circle cx="973.3" cy="1022.8" r="6" fill="#45872f"/>
<circle cx="1125.8" cy="1011.3" r="6" fill="#45872f"/>
<circle cx="1278.2" cy="964.7" r="6" fill="#45872f"/>
<circle cx="1430.7" cy="921.3" r="6" fill="#45872f"/>
<circle cx="1583.1" cy="905.0" r="6" fill="#45872f"/>
<circle cx="1735.6" cy="868.8" r="6" fill="#45872f"/>
<circle cx="1888.1" cy="981.9" r="6" fill="#45872f"/>
<circle cx="2040.5" cy="993.2" r="6" fill="#45872f"/>
<circle cx="2193.0" cy="1029.0" r="6" fill="#45872f"/>
<text x="141.5" y="813.0" font-size="28" fill="#444" stroke="#f8ddfb" stroke-width="6" stroke-linejoin="round" paint-order="stroke">60,000,000円</text>
<text x="141.5" y="912.5" font-size="28" fill="#444" stroke="#f8ddfb" stroke-width="6" stroke-linejoin="round" paint-order="stroke">45,000,000円</text>
<text x="141.5" y="1011.9" font-size="28" fill="#444" stroke="#f8ddfb" stroke-width="6" stroke-linejoin="round" paint-order="stroke">30,000,000円</text>
<text x="141.5" y="1111.3" font-size="28" fill="#444" stroke="#f8ddfb" stroke-width="6" stroke-linejoin="round" paint-order="stroke">15,000,000円</text>
<text x="2261" y="813.0" font-size="28" fill="#444" text-anchor="end" stroke="#f8ddfb" stroke-width="6" stroke-linejoin="round" paint-order="stroke">2,000件</text>
<text x="2261" y="912.5" font-size="28" fill="#444" text-anchor="end" stroke="#f8ddfb" stroke-width="6" stroke-linejoin="round" paint-order="stroke">1,500件</text>
<text x="2261" y="1011.9" font-size="28" fill="#444" text-anchor="end" stroke="#f8ddfb" stroke-width="6" stroke-linejoin="round" paint-order="stroke">1,000件</text>
<text x="2261" y="1111.3" font-size="28" fill="#444" text-anchor="end" stroke="#f8ddfb" stroke-width="6" stroke-linejoin="round" paint-order="stroke">500件</text>
<text x="210.5" y="1208.5" font-size="20" fill="#222" text-anchor="middle">2016.01</text>
<text x="363.0" y="1208.5" font-size="20" fill="#222" text-anchor="middle">2016.02</text>
<text x="515.4" y="1208.5" font-size="20" fill="#222" text-anchor="middle">2016.03</text>
<text x="667.9" y="1208.5" font-size="20" fill="#222" text-anchor="middle">2016.04</text>
<text x="820.3" y="1208.5" font-size="20" fill="#222" text-anchor="middle">2016.05</text>
<text x="972.8" y="1208.5" font-size="20" fill="#222" text-anchor="middle">2016.06</text>
<text x="1125.3" y="1208.5" font-size="20" fill="#222" text-anchor="middle">2016.07</text>
<text x="1277.7" y="1208.5" font-size="20" fill="#222" text-anchor="middle">2016.08</text>
<text x="1430.2" y="1208.5" font-size="20" fill="#222" text-anchor="middle">2016.09</text>
<text x="1582.6" y="1208.5" font-size="20" fill="#222" text-anchor="middle">2016.10</text>
<text x="1735.1" y="1208.5" font-size="20" fill="#222" text-anchor="middle">2016.11</text>
<text x="1887.6" y="1208.5" font-size="20" fill="#222" text-anchor="middle">2016.12</text>
<text x="2040.0" y="1208.5" font-size="20" fill="#222" text-anchor="middle">2017.01</text>
<text x="2192.5" y="1208.5" font-size="20" fill="#222" text-anchor="middle">2017.02</text>
<text transform="translate(105,979.5) rotate(-90)" font-size="28" font-style="italic" fill="#222" text-anchor="middle">売上高 (折線)</text>
<text transform="translate(2318,979.5) rotate(-90)" font-size="28" font-style="italic" fill="#222" text-anchor="middle">販売件数 (棒)</text>
<text x="134" y="699" font-size="35" font-weight="bold" fill="#000" letter-spacing="0.8">売上対比グラフ</text>
<rect x="134" y="735.7" width="56" height="4" fill="#4a6bdb"/><circle cx="162" cy="737.7" r="6" fill="#4a6bdb"/>
<text x="200.5" y="747.5" font-size="28" fill="#222">売上高</text>
<rect x="330" y="724" width="56" height="28" fill="#8cbdf8"/>
<text x="396.5" y="747.5" font-size="28" fill="#222">件数</text>
<rect x="497.7" y="735.7" width="56" height="4" fill="#45872f"/><circle cx="525.7" cy="737.7" r="6" fill="#45872f"/>
<text x="564.5" y="747.5" font-size="28" fill="#222">売上高(1年前)</text>
<rect x="784" y="724" width="56" height="28" fill="#aef79e"/>
<text x="850.5" y="747.5" font-size="28" fill="#222">件数(1年前)</text>
</svg>
<div class="a" style="left:54px;top:1370px;width:1462px;height:600px;background:#7f7f7f"></div>
<div class="a" style="left:56px;top:1372px;width:131px;height:78px;background:#7790ea"></div>
<div class="a" style="left:189px;top:1372px;width:702px;height:28px;background:#7790ea"></div>
<div class="a" style="left:893px;top:1372px;width:621px;height:28px;background:#7790ea"></div>
<div class="a" style="left:189px;top:1402px;width:73px;height:48px;background:#7790ea"></div>
<div class="a" style="left:264px;top:1402px;width:208px;height:48px;background:#7790ea"></div>
<div class="a" style="left:474px;top:1402px;width:208px;height:48px;background:#7790ea"></div>
<div class="a" style="left:684px;top:1402px;width:207px;height:48px;background:#7790ea"></div>
<div class="a" style="left:893px;top:1402px;width:74px;height:48px;background:#7790ea"></div>
<div class="a" style="left:969px;top:1402px;width:208px;height:48px;background:#7790ea"></div>
<div class="a" style="left:1179px;top:1402px;width:208px;height:48px;background:#7790ea"></div>
<div class="a" style="left:1389px;top:1402px;width:125px;height:48px;background:#7790ea"></div>
<div class="a" style="left:56px;top:1452px;width:131px;height:2px;background:#7790ea"></div>
<div class="a" style="left:189px;top:1452px;width:73px;height:1px;background:#98aaf0"></div>
<div class="a" style="left:189px;top:1453px;width:73px;height:1px;background:#f4e8f4"></div>
<div class="a" style="left:264px;top:1452px;width:208px;height:1px;background:#98aaf0"></div>
<div class="a" style="left:264px;top:1453px;width:208px;height:1px;background:#f4e8f4"></div>
<div class="a" style="left:474px;top:1452px;width:208px;height:1px;background:#98aaf0"></div>
<div class="a" style="left:474px;top:1453px;width:208px;height:1px;background:#f4e8f4"></div>
<div class="a" style="left:684px;top:1452px;width:207px;height:1px;background:#98aaf0"></div>
<div class="a" style="left:684px;top:1453px;width:207px;height:1px;background:#f4e8f4"></div>
<div class="a" style="left:893px;top:1452px;width:74px;height:1px;background:#98aaf0"></div>
<div class="a" style="left:893px;top:1453px;width:74px;height:1px;background:#f4e8f4"></div>
<div class="a" style="left:969px;top:1452px;width:208px;height:1px;background:#98aaf0"></div>
<div class="a" style="left:969px;top:1453px;width:208px;height:1px;background:#f4e8f4"></div>
<div class="a" style="left:1179px;top:1452px;width:208px;height:1px;background:#98aaf0"></div>
<div class="a" style="left:1179px;top:1453px;width:208px;height:1px;background:#f4e8f4"></div>
<div class="a" style="left:1389px;top:1452px;width:125px;height:1px;background:#98aaf0"></div>
<div class="a" style="left:1389px;top:1453px;width:125px;height:1px;background:#f4e8f4"></div>
<div class="t" style="top:1402.6px;font-size:18px;line-height:18px;color:#f1f3fd;font-weight:bold;left:11.0px;width:220px;text-align:center;letter-spacing:2px;text-indent:2px;-webkit-text-stroke:0.4px;">日付</div>
<div class="t" style="top:1378.6px;font-size:18px;line-height:18px;color:#f1f3fd;font-weight:bold;left:430.0px;width:220px;text-align:center;letter-spacing:2px;text-indent:2px;-webkit-text-stroke:0.4px;">指定期間</div>
<div class="t" style="top:1378.6px;font-size:18px;line-height:18px;color:#f1f3fd;font-weight:bold;left:1094.0px;width:220px;text-align:center;letter-spacing:2px;text-indent:2px;-webkit-text-stroke:0.4px;">1年前</div>
<div class="t" style="top:1409.6px;font-size:18px;line-height:18px;color:#f1f3fd;font-weight:bold;left:115.5px;width:220px;text-align:center;letter-spacing:2px;text-indent:2px;-webkit-text-stroke:0.4px;">販売</div>
<div class="t" style="top:1428.1px;font-size:18px;line-height:18px;color:#f1f3fd;font-weight:bold;left:115.5px;width:220px;text-align:center;letter-spacing:2px;text-indent:2px;-webkit-text-stroke:0.4px;">件数</div>
<div class="t" style="top:1418.6px;font-size:18px;line-height:18px;color:#f1f3fd;font-weight:bold;left:258.0px;width:220px;text-align:center;letter-spacing:2px;text-indent:2px;-webkit-text-stroke:0.4px;">売上高</div>
<div class="t" style="top:1409.6px;font-size:18px;line-height:18px;color:#f1f3fd;font-weight:bold;left:468.0px;width:220px;text-align:center;letter-spacing:2px;text-indent:2px;-webkit-text-stroke:0.4px;">売上高</div>
<div class="t" style="top:1428.1px;font-size:18px;line-height:18px;color:#f1f3fd;font-weight:bold;left:468.0px;width:220px;text-align:center;letter-spacing:2px;text-indent:2px;-webkit-text-stroke:0.4px;">(平均)</div>
<div class="t" style="top:1409.6px;font-size:18px;line-height:18px;color:#f1f3fd;font-weight:bold;left:677.5px;width:220px;text-align:center;letter-spacing:2px;text-indent:2px;-webkit-text-stroke:0.4px;">売上高</div>
<div class="t" style="top:1428.1px;font-size:18px;line-height:18px;color:#f1f3fd;font-weight:bold;left:677.5px;width:220px;text-align:center;letter-spacing:2px;text-indent:2px;-webkit-text-stroke:0.4px;">(累計)</div>
<div class="t" style="top:1409.6px;font-size:18px;line-height:18px;color:#f1f3fd;font-weight:bold;left:820.0px;width:220px;text-align:center;letter-spacing:2px;text-indent:2px;-webkit-text-stroke:0.4px;">販売</div>
<div class="t" style="top:1428.1px;font-size:18px;line-height:18px;color:#f1f3fd;font-weight:bold;left:820.0px;width:220px;text-align:center;letter-spacing:2px;text-indent:2px;-webkit-text-stroke:0.4px;">件数</div>
<div class="t" style="top:1418.6px;font-size:18px;line-height:18px;color:#f1f3fd;font-weight:bold;left:963.0px;width:220px;text-align:center;letter-spacing:2px;text-indent:2px;-webkit-text-stroke:0.4px;">売上高</div>
<div class="t" style="top:1409.6px;font-size:18px;line-height:18px;color:#f1f3fd;font-weight:bold;left:1173.0px;width:220px;text-align:center;letter-spacing:2px;text-indent:2px;-webkit-text-stroke:0.4px;">売上高</div>
<div class="t" style="top:1428.1px;font-size:18px;line-height:18px;color:#f1f3fd;font-weight:bold;left:1173.0px;width:220px;text-align:center;letter-spacing:2px;text-indent:2px;-webkit-text-stroke:0.4px;">(平均)</div>
<div class="t" style="top:1409.6px;font-size:18px;line-height:18px;color:#f1f3fd;font-weight:bold;left:1342.0px;width:220px;text-align:center;letter-spacing:2px;text-indent:2px;-webkit-text-stroke:0.4px;">売上高</div>
<div class="t" style="top:1428.1px;font-size:18px;line-height:18px;color:#f1f3fd;font-weight:bold;left:1342.0px;width:220px;text-align:center;letter-spacing:2px;text-indent:2px;-webkit-text-stroke:0.4px;">(累計)</div>
<div class="a" style="left:56px;top:1456px;width:131px;height:77px;background:#7790ea"></div>
<div class="a" style="left:189px;top:1456px;width:73px;height:77px;background:#fcf0f3"></div>
<div class="a" style="left:264px;top:1456px;width:208px;height:77px;background:#fcf0f3"></div>
<div class="a" style="left:474px;top:1456px;width:208px;height:77px;background:#fcf0f3"></div>
<div class="a" style="left:684px;top:1456px;width:207px;height:77px;background:#fcf0f3"></div>
<div class="a" style="left:893px;top:1456px;width:74px;height:77px;background:#fcf0f3"></div>
<div class="a" style="left:969px;top:1456px;width:208px;height:77px;background:#fcf0f3"></div>
<div class="a" style="left:1179px;top:1456px;width:208px;height:77px;background:#fcf0f3"></div>
<div class="a" style="left:1389px;top:1456px;width:125px;height:77px;background:#fcf0f3"></div>
<div class="t" style="top:1482.5px;font-size:24px;line-height:24px;color:#f1f3fd;font-weight:bold;left:56.0px;width:130px;text-align:center;letter-spacing:0.3px">2016.01</div>
<div class="t" style="top:1483.0px;font-size:23px;line-height:23px;color:#1a1a1a;right:3061.0px;text-align:right;transform:scaleX(0.913);transform-origin:100% 50%;">738</div>
<div class="t" style="top:1483.0px;font-size:23px;line-height:23px;color:#1a1a1a;right:2851.0px;text-align:right;transform:scaleX(0.913);transform-origin:100% 50%;">27,996,227</div>
<div class="t" style="top:1483.0px;font-size:23px;line-height:23px;color:#1a1a1a;right:2641.0px;text-align:right;transform:scaleX(0.913);transform-origin:100% 50%;">37,935</div>
<div class="t" style="top:1483.0px;font-size:23px;line-height:23px;color:#1a1a1a;right:2432.0px;text-align:right;transform:scaleX(0.913);transform-origin:100% 50%;">27,996,227</div>
<div class="t" style="top:1459.0px;font-size:23px;line-height:23px;color:#1a1a1a;right:2356.0px;text-align:right;transform:scaleX(0.913);transform-origin:100% 50%;">547</div>
<div class="t" style="top:1481.5px;font-size:23px;line-height:23px;color:#0000f0;right:2361.0px;text-align:right;"><svg width="12" height="20" viewBox="0 0 12 20" style="vertical-align:-3px;margin-right:0px"><path d="M6 1.5V19M1.5 7L6 1.5L10.5 7" fill="none" stroke="#0000f0" stroke-width="2"/></svg></div>
<div class="t" style="top:1506.5px;font-size:23px;line-height:23px;color:#0000f0;right:2356.0px;text-align:right;transform:scaleX(0.913);transform-origin:100% 50%;">(191)</div>
<div class="t" style="top:1471.0px;font-size:23px;line-height:23px;color:#1a1a1a;right:2146.0px;text-align:right;transform:scaleX(0.913);transform-origin:100% 50%;">22,901,141</div>
<div class="t" style="top:1494.8px;font-size:23px;line-height:23px;color:#0000f0;right:2146.0px;text-align:right;transform:scaleX(0.913);transform-origin:100% 50%;"><svg width="12" height="20" viewBox="0 0 12 20" style="vertical-align:-3px;margin-right:16px"><path d="M6 1.5V19M1.5 7L6 1.5L10.5 7" fill="none" stroke="#0000f0" stroke-width="2"/></svg>(5,095,086)</div>
<div class="t" style="top:1471.0px;font-size:23px;line-height:23px;color:#1a1a1a;right:1936.0px;text-align:right;transform:scaleX(0.913);transform-origin:100% 50%;">41,866</div>
<div class="t" style="top:1494.8px;font-size:23px;line-height:23px;color:#8b0a0a;right:1936.0px;text-align:right;transform:scaleX(0.913);transform-origin:100% 50%;"><svg width="12" height="20" viewBox="0 0 12 20" style="vertical-align:-3px;margin-right:16px"><path d="M6 1V18.5M1.5 13L6 18.5L10.5 13" fill="none" stroke="#8b0a0a" stroke-width="2"/></svg>(3,931)</div>
<div class="t" style="top:1459.0px;font-size:23px;line-height:23px;color:#1a1a1a;right:1809.0px;text-align:right;transform:scaleX(0.913);transform-origin:100% 50%;">22,901,141</div>
<div class="t" style="top:1481.5px;font-size:23px;line-height:23px;color:#0000f0;right:1814.0px;text-align:right;"><svg width="12" height="20" viewBox="0 0 12 20" style="vertical-align:-3px;margin-right:0px"><path d="M6 1.5V19M1.5 7L6 1.5L10.5 7" fill="none" stroke="#0000f0" stroke-width="2"/></svg></div>
<div class="t" style="top:1506.5px;font-size:23px;line-height:23px;color:#0000f0;right:1809.0px;text-align:right;transform:scaleX(0.913);transform-origin:100% 50%;">(5,095,086)</div>
<div class="a" style="left:56px;top:1533px;width:131px;height:78px;background:#7790ea"></div>
<div class="a" style="left:189px;top:1533px;width:73px;height:78px;background:#fae5e3"></div>
<div class="a" style="left:264px;top:1533px;width:208px;height:78px;background:#fae5e3"></div>
<div class="a" style="left:474px;top:1533px;width:208px;height:78px;background:#fae5e3"></div>
<div class="a" style="left:684px;top:1533px;width:207px;height:78px;background:#fae5e3"></div>
<div class="a" style="left:893px;top:1533px;width:74px;height:78px;background:#fae5e3"></div>
<div class="a" style="left:969px;top:1533px;width:208px;height:78px;background:#fae5e3"></div>
<div class="a" style="left:1179px;top:1533px;width:208px;height:78px;background:#fae5e3"></div>
<div class="a" style="left:1389px;top:1533px;width:125px;height:78px;background:#fae5e3"></div>
<div class="t" style="top:1560.5px;font-size:24px;line-height:24px;color:#f1f3fd;font-weight:bold;left:56.0px;width:130px;text-align:center;letter-spacing:0.3px">2016.02</div>
<div class="t" style="top:1561.0px;font-size:23px;line-height:23px;color:#1a1a1a;right:3061.0px;text-align:right;transform:scaleX(0.913);transform-origin:100% 50%;">793</div>
<div class="t" style="top:1561.0px;font-size:23px;line-height:23px;color:#1a1a1a;right:2851.0px;text-align:right;transform:scaleX(0.913);transform-origin:100% 50%;">22,610,780</div>
<div class="t" style="top:1561.0px;font-size:23px;line-height:23px;color:#1a1a1a;right:2641.0px;text-align:right;transform:scaleX(0.913);transform-origin:100% 50%;">28,512</div>
<div class="t" style="top:1561.0px;font-size:23px;line-height:23px;color:#1a1a1a;right:2432.0px;text-align:right;transform:scaleX(0.913);transform-origin:100% 50%;">50,607,007</div>
<div class="t" style="top:1537.0px;font-size:23px;line-height:23px;color:#1a1a1a;right:2356.0px;text-align:right;transform:scaleX(0.913);transform-origin:100% 50%;">628</div>
<div class="t" style="top:1559.5px;font-size:23px;line-height:23px;color:#0000f0;right:2361.0px;text-align:right;"><svg width="12" height="20" viewBox="0 0 12 20" style="vertical-align:-3px;margin-right:0px"><path d="M6 1.5V19M1.5 7L6 1.5L10.5 7" fill="none" stroke="#0000f0" stroke-width="2"/></svg></div>
<div class="t" style="top:1584.5px;font-size:23px;line-height:23px;color:#0000f0;right:2356.0px;text-align:right;transform:scaleX(0.913);transform-origin:100% 50%;">(165)</div>
<div class="t" style="top:1549.0px;font-size:23px;line-height:23px;color:#1a1a1a;right:2146.0px;text-align:right;transform:scaleX(0.913);transform-origin:100% 50%;">23,194,617</div>
<div class="t" style="top:1572.8px;font-size:23px;line-height:23px;color:#8b0a0a;right:2146.0px;text-align:right;transform:scaleX(0.913);transform-origin:100% 50%;"><svg width="12" height="20" viewBox="0 0 12 20" style="vertical-align:-3px;margin-right:16px"><path d="M6 1V18.5M1.5 13L6 18.5L10.5 13" fill="none" stroke="#8b0a0a" stroke-width="2"/></svg>(583,837)</div>
<div class="t" style="top:1549.0px;font-size:23px;line-height:23px;color:#1a1a1a;right:1936.0px;text-align:right;transform:scaleX(0.913);transform-origin:100% 50%;">36,934</div>
<div class="t" style="top:1572.8px;font-size:23px;line-height:23px;color:#8b0a0a;right:1936.0px;text-align:right;transform:scaleX(0.913);transform-origin:100% 50%;"><svg width="12" height="20" viewBox="0 0 12 20" style="vertical-align:-3px;margin-right:16px"><path d="M6 1V18.5M1.5 13L6 18.5L10.5 13" fill="none" stroke="#8b0a0a" stroke-width="2"/></svg>(8,422)</div>
<div class="t" style="top:1537.0px;font-size:23px;line-height:23px;color:#1a1a1a;right:1809.0px;text-align:right;transform:scaleX(0.913);transform-origin:100% 50%;">46,095,758</div>
<div class="t" style="top:1559.5px;font-size:23px;line-height:23px;color:#0000f0;right:1814.0px;text-align:right;"><svg width="12" height="20" viewBox="0 0 12 20" style="vertical-align:-3px;margin-right:0px"><path d="M6 1.5V19M1.5 7L6 1.5L10.5 7" fill="none" stroke="#0000f0" stroke-width="2"/></svg></div>
<div class="t" style="top:1584.5px;font-size:23px;line-height:23px;color:#0000f0;right:1809.0px;text-align:right;transform:scaleX(0.913);transform-origin:100% 50%;">(4,511,249)</div>
<div class="a" style="left:56px;top:1611px;width:131px;height:78px;background:#7790ea"></div>
<div class="a" style="left:189px;top:1611px;width:73px;height:78px;background:#fcf0f3"></div>
<div class="a" style="left:264px;top:1611px;width:208px;height:78px;background:#fcf0f3"></div>
<div class="a" style="left:474px;top:1611px;width:208px;height:78px;background:#fcf0f3"></div>
<div class="a" style="left:684px;top:1611px;width:207px;height:78px;background:#fcf0f3"></div>
<div class="a" style="left:893px;top:1611px;width:74px;height:78px;background:#fcf0f3"></div>
<div class="a" style="left:969px;top:1611px;width:208px;height:78px;background:#fcf0f3"></div>
<div class="a" style="left:1179px;top:1611px;width:208px;height:78px;background:#fcf0f3"></div>
<div class="a" style="left:1389px;top:1611px;width:125px;height:78px;background:#fcf0f3"></div>
<div class="t" style="top:1638.5px;font-size:24px;line-height:24px;color:#f1f3fd;font-weight:bold;left:56.0px;width:130px;text-align:center;letter-spacing:0.3px">2016.03</div>
<div class="t" style="top:1639.0px;font-size:23px;line-height:23px;color:#1a1a1a;right:3061.0px;text-align:right;transform:scaleX(0.913);transform-origin:100% 50%;">993</div>
<div class="t" style="top:1639.0px;font-size:23px;line-height:23px;color:#1a1a1a;right:2851.0px;text-align:right;transform:scaleX(0.913);transform-origin:100% 50%;">28,314,068</div>
<div class="t" style="top:1639.0px;font-size:23px;line-height:23px;color:#1a1a1a;right:2641.0px;text-align:right;transform:scaleX(0.913);transform-origin:100% 50%;">28,513</div>
<div class="t" style="top:1639.0px;font-size:23px;line-height:23px;color:#1a1a1a;right:2432.0px;text-align:right;transform:scaleX(0.913);transform-origin:100% 50%;">78,921,075</div>
<div class="t" style="top:1615.0px;font-size:23px;line-height:23px;color:#1a1a1a;right:2356.0px;text-align:right;transform:scaleX(0.913);transform-origin:100% 50%;">844</div>
<div class="t" style="top:1637.5px;font-size:23px;line-height:23px;color:#0000f0;right:2361.0px;text-align:right;"><svg width="12" height="20" viewBox="0 0 12 20" style="vertical-align:-3px;margin-right:0px"><path d="M6 1.5V19M1.5 7L6 1.5L10.5 7" fill="none" stroke="#0000f0" stroke-width="2"/></svg></div>
<div class="t" style="top:1662.5px;font-size:23px;line-height:23px;color:#0000f0;right:2356.0px;text-align:right;transform:scaleX(0.913);transform-origin:100% 50%;">(149)</div>
<div class="t" style="top:1627.0px;font-size:23px;line-height:23px;color:#1a1a1a;right:2146.0px;text-align:right;transform:scaleX(0.913);transform-origin:100% 50%;">26,720,009</div>
<div class="t" style="top:1650.8px;font-size:23px;line-height:23px;color:#0000f0;right:2146.0px;text-align:right;transform:scaleX(0.913);transform-origin:100% 50%;"><svg width="12" height="20" viewBox="0 0 12 20" style="vertical-align:-3px;margin-right:16px"><path d="M6 1.5V19M1.5 7L6 1.5L10.5 7" fill="none" stroke="#0000f0" stroke-width="2"/></svg>(1,594,059)</div>
<div class="t" style="top:1627.0px;font-size:23px;line-height:23px;color:#1a1a1a;right:1936.0px;text-align:right;transform:scaleX(0.913);transform-origin:100% 50%;">31,658</div>
<div class="t" style="top:1650.8px;font-size:23px;line-height:23px;color:#8b0a0a;right:1936.0px;text-align:right;transform:scaleX(0.913);transform-origin:100% 50%;"><svg width="12" height="20" viewBox="0 0 12 20" style="vertical-align:-3px;margin-right:16px"><path d="M6 1V18.5M1.5 13L6 18.5L10.5 13" fill="none" stroke="#8b0a0a" stroke-width="2"/></svg>(3,145)</div>
<div class="t" style="top:1615.0px;font-size:23px;line-height:23px;color:#1a1a1a;right:1809.0px;text-align:right;transform:scaleX(0.913);transform-origin:100% 50%;">72,815,767</div>
<div class="t" style="top:1637.5px;font-size:23px;line-height:23px;color:#0000f0;right:1814.0px;text-align:right;"><svg width="12" height="20" viewBox="0 0 12 20" style="vertical-align:-3px;margin-right:0px"><path d="M6 1.5V19M1.5 7L6 1.5L10.5 7" fill="none" stroke="#0000f0" stroke-width="2"/></svg></div>
<div class="t" style="top:1662.5px;font-size:23px;line-height:23px;color:#0000f0;right:1809.0px;text-align:right;transform:scaleX(0.913);transform-origin:100% 50%;">(6,105,308)</div>
<div class="a" style="left:56px;top:1689px;width:131px;height:78px;background:#7790ea"></div>
<div class="a" style="left:189px;top:1689px;width:73px;height:78px;background:#fae5e3"></div>
<div class="a" style="left:264px;top:1689px;width:208px;height:78px;background:#fae5e3"></div>
<div class="a" style="left:474px;top:1689px;width:208px;height:78px;background:#fae5e3"></div>
<div class="a" style="left:684px;top:1689px;width:207px;height:78px;background:#fae5e3"></div>
<div class="a" style="left:893px;top:1689px;width:74px;height:78px;background:#fae5e3"></div>
<div class="a" style="left:969px;top:1689px;width:208px;height:78px;background:#fae5e3"></div>
<div class="a" style="left:1179px;top:1689px;width:208px;height:78px;background:#fae5e3"></div>
<div class="a" style="left:1389px;top:1689px;width:125px;height:78px;background:#fae5e3"></div>
<div class="t" style="top:1716.5px;font-size:24px;line-height:24px;color:#f1f3fd;font-weight:bold;left:56.0px;width:130px;text-align:center;letter-spacing:0.3px">2016.04</div>
<div class="t" style="top:1717.0px;font-size:23px;line-height:23px;color:#1a1a1a;right:3061.0px;text-align:right;transform:scaleX(0.913);transform-origin:100% 50%;">1,274</div>
<div class="t" style="top:1717.0px;font-size:23px;line-height:23px;color:#1a1a1a;right:2851.0px;text-align:right;transform:scaleX(0.913);transform-origin:100% 50%;">25,276,239</div>
<div class="t" style="top:1717.0px;font-size:23px;line-height:23px;color:#1a1a1a;right:2641.0px;text-align:right;transform:scaleX(0.913);transform-origin:100% 50%;">19,840</div>
<div class="t" style="top:1717.0px;font-size:23px;line-height:23px;color:#1a1a1a;right:2432.0px;text-align:right;transform:scaleX(0.913);transform-origin:100% 50%;">104,197,314</div>
<div class="t" style="top:1693.0px;font-size:23px;line-height:23px;color:#1a1a1a;right:2356.0px;text-align:right;transform:scaleX(0.913);transform-origin:100% 50%;">1,381</div>
<div class="t" style="top:1715.5px;font-size:23px;line-height:23px;color:#8b0a0a;right:2361.0px;text-align:right;"><svg width="12" height="20" viewBox="0 0 12 20" style="vertical-align:-3px;margin-right:0px"><path d="M6 1V18.5M1.5 13L6 18.5L10.5 13" fill="none" stroke="#8b0a0a" stroke-width="2"/></svg></div>
<div class="t" style="top:1740.5px;font-size:23px;line-height:23px;color:#8b0a0a;right:2356.0px;text-align:right;transform:scaleX(0.913);transform-origin:100% 50%;">(107)</div>
<div class="t" style="top:1705.0px;font-size:23px;line-height:23px;color:#1a1a1a;right:2146.0px;text-align:right;transform:scaleX(0.913);transform-origin:100% 50%;">23,232,471</div>
<div class="t" style="top:1728.8px;font-size:23px;line-height:23px;color:#0000f0;right:2146.0px;text-align:right;transform:scaleX(0.913);transform-origin:100% 50%;"><svg width="12" height="20" viewBox="0 0 12 20" style="vertical-align:-3px;margin-right:16px"><path d="M6 1.5V19M1.5 7L6 1.5L10.5 7" fill="none" stroke="#0000f0" stroke-width="2"/></svg>(2,043,768)</div>
<div class="t" style="top:1705.0px;font-size:23px;line-height:23px;color:#1a1a1a;right:1936.0px;text-align:right;transform:scaleX(0.913);transform-origin:100% 50%;">16,822</div>
<div class="t" style="top:1728.8px;font-size:23px;line-height:23px;color:#0000f0;right:1936.0px;text-align:right;transform:scaleX(0.913);transform-origin:100% 50%;"><svg width="12" height="20" viewBox="0 0 12 20" style="vertical-align:-3px;margin-right:16px"><path d="M6 1.5V19M1.5 7L6 1.5L10.5 7" fill="none" stroke="#0000f0" stroke-width="2"/></svg>(3,018)</div>
<div class="t" style="top:1693.0px;font-size:23px;line-height:23px;color:#1a1a1a;right:1809.0px;text-align:right;transform:scaleX(0.913);transform-origin:100% 50%;">96,048,238</div>
<div class="t" style="top:1715.5px;font-size:23px;line-height:23px;color:#0000f0;right:1814.0px;text-align:right;"><svg width="12" height="20" viewBox="0 0 12 20" style="vertical-align:-3px;margin-right:0px"><path d="M6 1.5V19M1.5 7L6 1.5L10.5 7" fill="none" stroke="#0000f0" stroke-width="2"/></svg></div>
<div class="t" style="top:1740.5px;font-size:23px;line-height:23px;color:#0000f0;right:1809.0px;text-align:right;transform:scaleX(0.913);transform-origin:100% 50%;">(8,149,076)</div>
<div class="a" style="left:56px;top:1767px;width:131px;height:78px;background:#7790ea"></div>
<div class="a" style="left:189px;top:1767px;width:73px;height:78px;background:#fcf0f3"></div>
<div class="a" style="left:264px;top:1767px;width:208px;height:78px;background:#fcf0f3"></div>
<div class="a" style="left:474px;top:1767px;width:208px;height:78px;background:#fcf0f3"></div>
<div class="a" style="left:684px;top:1767px;width:207px;height:78px;background:#fcf0f3"></div>
<div class="a" style="left:893px;top:1767px;width:74px;height:78px;background:#fcf0f3"></div>
<div class="a" style="left:969px;top:1767px;width:208px;height:78px;background:#fcf0f3"></div>
<div class="a" style="left:1179px;top:1767px;width:208px;height:78px;background:#fcf0f3"></div>
<div class="a" style="left:1389px;top:1767px;width:125px;height:78px;background:#fcf0f3"></div>
<div class="t" style="top:1794.5px;font-size:24px;line-height:24px;color:#f1f3fd;font-weight:bold;left:56.0px;width:130px;text-align:center;letter-spacing:0.3px">2016.05</div>
<div class="t" style="top:1795.0px;font-size:23px;line-height:23px;color:#1a1a1a;right:3061.0px;text-align:right;transform:scaleX(0.913);transform-origin:100% 50%;">1,088</div>
<div class="t" style="top:1795.0px;font-size:23px;line-height:23px;color:#1a1a1a;right:2851.0px;text-align:right;transform:scaleX(0.913);transform-origin:100% 50%;">26,637,930</div>
<div class="t" style="top:1795.0px;font-size:23px;line-height:23px;color:#1a1a1a;right:2641.0px;text-align:right;transform:scaleX(0.913);transform-origin:100% 50%;">24,483</div>
<div class="t" style="top:1795.0px;font-size:23px;line-height:23px;color:#1a1a1a;right:2432.0px;text-align:right;transform:scaleX(0.913);transform-origin:100% 50%;">130,835,244</div>
<div class="t" style="top:1771.0px;font-size:23px;line-height:23px;color:#1a1a1a;right:2356.0px;text-align:right;transform:scaleX(0.913);transform-origin:100% 50%;">1,011</div>
<div class="t" style="top:1793.5px;font-size:23px;line-height:23px;color:#0000f0;right:2361.0px;text-align:right;"><svg width="12" height="20" viewBox="0 0 12 20" style="vertical-align:-3px;margin-right:0px"><path d="M6 1.5V19M1.5 7L6 1.5L10.5 7" fill="none" stroke="#0000f0" stroke-width="2"/></svg></div>
<div class="t" style="top:1818.5px;font-size:23px;line-height:23px;color:#0000f0;right:2356.0px;text-align:right;transform:scaleX(0.913);transform-origin:100% 50%;">(77)</div>
<div class="t" style="top:1783.0px;font-size:23px;line-height:23px;color:#1a1a1a;right:2146.0px;text-align:right;transform:scaleX(0.913);transform-origin:100% 50%;">28,563,395</div>
<div class="t" style="top:1806.8px;font-size:23px;line-height:23px;color:#8b0a0a;right:2146.0px;text-align:right;transform:scaleX(0.913);transform-origin:100% 50%;"><svg width="12" height="20" viewBox="0 0 12 20" style="vertical-align:-3px;margin-right:16px"><path d="M6 1V18.5M1.5 13L6 18.5L10.5 13" fill="none" stroke="#8b0a0a" stroke-width="2"/></svg>(1,925,465)</div>
<div class="t" style="top:1783.0px;font-size:23px;line-height:23px;color:#1a1a1a;right:1936.0px;text-align:right;transform:scaleX(0.913);transform-origin:100% 50%;">28,252</div>
<div class="t" style="top:1806.8px;font-size:23px;line-height:23px;color:#8b0a0a;right:1936.0px;text-align:right;transform:scaleX(0.913);transform-origin:100% 50%;"><svg width="12" height="20" viewBox="0 0 12 20" style="vertical-align:-3px;margin-right:16px"><path d="M6 1V18.5M1.5 13L6 18.5L10.5 13" fill="none" stroke="#8b0a0a" stroke-width="2"/></svg>(3,769)</div>
<div class="t" style="top:1771.0px;font-size:23px;line-height:23px;color:#1a1a1a;right:1809.0px;text-align:right;transform:scaleX(0.913);transform-origin:100% 50%;">124,611,633</div>
<div class="t" style="top:1793.5px;font-size:23px;line-height:23px;color:#0000f0;right:1814.0px;text-align:right;"><svg width="12" height="20" viewBox="0 0 12 20" style="vertical-align:-3px;margin-right:0px"><path d="M6 1.5V19M1.5 7L6 1.5L10.5 7" fill="none" stroke="#0000f0" stroke-width="2"/></svg></div>
<div class="t" style="top:1818.5px;font-size:23px;line-height:23px;color:#0000f0;right:1809.0px;text-align:right;transform:scaleX(0.913);transform-origin:100% 50%;">(6,223,611)</div>
<div class="a" style="left:56px;top:1845px;width:131px;height:78px;background:#7790ea"></div>
<div class="a" style="left:189px;top:1845px;width:73px;height:78px;background:#fae5e3"></div>
<div class="a" style="left:264px;top:1845px;width:208px;height:78px;background:#fae5e3"></div>
<div class="a" style="left:474px;top:1845px;width:208px;height:78px;background:#fae5e3"></div>
<div class="a" style="left:684px;top:1845px;width:207px;height:78px;background:#fae5e3"></div>
<div class="a" style="left:893px;top:1845px;width:74px;height:78px;background:#fae5e3"></div>
<div class="a" style="left:969px;top:1845px;width:208px;height:78px;background:#fae5e3"></div>
<div class="a" style="left:1179px;top:1845px;width:208px;height:78px;background:#fae5e3"></div>
<div class="a" style="left:1389px;top:1845px;width:125px;height:78px;background:#fae5e3"></div>
<div class="t" style="top:1872.5px;font-size:24px;line-height:24px;color:#f1f3fd;font-weight:bold;left:56.0px;width:130px;text-align:center;letter-spacing:0.3px">2016.06</div>
<div class="t" style="top:1873.0px;font-size:23px;line-height:23px;color:#1a1a1a;right:3061.0px;text-align:right;transform:scaleX(0.913);transform-origin:100% 50%;">882</div>
<div class="t" style="top:1873.0px;font-size:23px;line-height:23px;color:#1a1a1a;right:2851.0px;text-align:right;transform:scaleX(0.913);transform-origin:100% 50%;">24,079,555</div>
<div class="t" style="top:1873.0px;font-size:23px;line-height:23px;color:#1a1a1a;right:2641.0px;text-align:right;transform:scaleX(0.913);transform-origin:100% 50%;">27,301</div>
<div class="t" style="top:1873.0px;font-size:23px;line-height:23px;color:#1a1a1a;right:2432.0px;text-align:right;transform:scaleX(0.913);transform-origin:100% 50%;">154,914,799</div>
<div class="t" style="top:1849.0px;font-size:23px;line-height:23px;color:#1a1a1a;right:2356.0px;text-align:right;transform:scaleX(0.913);transform-origin:100% 50%;">811</div>
<div class="t" style="top:1871.5px;font-size:23px;line-height:23px;color:#0000f0;right:2361.0px;text-align:right;"><svg width="12" height="20" viewBox="0 0 12 20" style="vertical-align:-3px;margin-right:0px"><path d="M6 1.5V19M1.5 7L6 1.5L10.5 7" fill="none" stroke="#0000f0" stroke-width="2"/></svg></div>
<div class="t" style="top:1896.5px;font-size:23px;line-height:23px;color:#0000f0;right:2356.0px;text-align:right;transform:scaleX(0.913);transform-origin:100% 50%;">(71)</div>
<div class="t" style="top:1861.0px;font-size:23px;line-height:23px;color:#1a1a1a;right:2146.0px;text-align:right;transform:scaleX(0.913);transform-origin:100% 50%;">23,530,295</div>
<div class="t" style="top:1884.8px;font-size:23px;line-height:23px;color:#0000f0;right:2146.0px;text-align:right;transform:scaleX(0.913);transform-origin:100% 50%;"><svg width="12" height="20" viewBox="0 0 12 20" style="vertical-align:-3px;margin-right:16px"><path d="M6 1.5V19M1.5 7L6 1.5L10.5 7" fill="none" stroke="#0000f0" stroke-width="2"/></svg>(549,260)</div>
<div class="t" style="top:1861.0px;font-size:23px;line-height:23px;color:#1a1a1a;right:1936.0px;text-align:right;transform:scaleX(0.913);transform-origin:100% 50%;">29,013</div>
<div class="t" style="top:1884.8px;font-size:23px;line-height:23px;color:#8b0a0a;right:1936.0px;text-align:right;transform:scaleX(0.913);transform-origin:100% 50%;"><svg width="12" height="20" viewBox="0 0 12 20" style="vertical-align:-3px;margin-right:16px"><path d="M6 1V18.5M1.5 13L6 18.5L10.5 13" fill="none" stroke="#8b0a0a" stroke-width="2"/></svg>(1,712)</div>
<div class="t" style="top:1849.0px;font-size:23px;line-height:23px;color:#1a1a1a;right:1809.0px;text-align:right;transform:scaleX(0.913);transform-origin:100% 50%;">148,141,928</div>
<div class="t" style="top:1871.5px;font-size:23px;line-height:23px;color:#0000f0;right:1814.0px;text-align:right;"><svg width="12" height="20" viewBox="0 0 12 20" style="vertical-align:-3px;margin-right:0px"><path d="M6 1.5V19M1.5 7L6 1.5L10.5 7" fill="none" stroke="#0000f0" stroke-width="2"/></svg></div>
<div class="t" style="top:1896.5px;font-size:23px;line-height:23px;color:#0000f0;right:1809.0px;text-align:right;transform:scaleX(0.913);transform-origin:100% 50%;">(6,772,871)</div>
<div class="a" style="left:56px;top:1532px;width:131px;height:2px;background:repeating-linear-gradient(90deg,#80807a 0 6px,transparent 6px 12px)"></div>
<div class="a" style="left:189px;top:1532px;width:1325px;height:2px;background:repeating-linear-gradient(90deg,#707270 0 6px,transparent 6px 12px)"></div>
<div class="a" style="left:56px;top:1610px;width:131px;height:2px;background:repeating-linear-gradient(90deg,#80807a 0 6px,transparent 6px 12px)"></div>
<div class="a" style="left:189px;top:1610px;width:1325px;height:2px;background:repeating-linear-gradient(90deg,#707270 0 6px,transparent 6px 12px)"></div>
<div class="a" style="left:56px;top:1688px;width:131px;height:2px;background:repeating-linear-gradient(90deg,#80807a 0 6px,transparent 6px 12px)"></div>
<div class="a" style="left:189px;top:1688px;width:1325px;height:2px;background:repeating-linear-gradient(90deg,#707270 0 6px,transparent 6px 12px)"></div>
<div class="a" style="left:56px;top:1766px;width:131px;height:2px;background:repeating-linear-gradient(90deg,#80807a 0 6px,transparent 6px 12px)"></div>
<div class="a" style="left:189px;top:1766px;width:1325px;height:2px;background:repeating-linear-gradient(90deg,#707270 0 6px,transparent 6px 12px)"></div>
<div class="a" style="left:56px;top:1844px;width:131px;height:2px;background:repeating-linear-gradient(90deg,#80807a 0 6px,transparent 6px 12px)"></div>
<div class="a" style="left:189px;top:1844px;width:1325px;height:2px;background:repeating-linear-gradient(90deg,#707270 0 6px,transparent 6px 12px)"></div>
<div class="a" style="left:56px;top:1922px;width:131px;height:2px;background:repeating-linear-gradient(90deg,#80807a 0 6px,transparent 6px 12px)"></div>
<div class="a" style="left:189px;top:1922px;width:1325px;height:2px;background:repeating-linear-gradient(90deg,#707270 0 6px,transparent 6px 12px)"></div>
<div class="a" style="left:262px;top:1456px;width:2px;height:460px;background:#b4b4b4"></div>
<div class="a" style="left:472px;top:1456px;width:2px;height:460px;background:#b4b4b4"></div>
<div class="a" style="left:682px;top:1456px;width:2px;height:460px;background:#b4b4b4"></div>
<div class="a" style="left:891px;top:1456px;width:2px;height:460px;background:#b4b4b4"></div>
<div class="a" style="left:967px;top:1456px;width:2px;height:460px;background:#b4b4b4"></div>
<div class="a" style="left:1177px;top:1456px;width:2px;height:460px;background:#b4b4b4"></div>
<div class="a" style="left:1387px;top:1456px;width:2px;height:460px;background:#b4b4b4"></div>
<div class="a" style="left:1514px;top:1456px;width:2px;height:460px;background:#b4b4b4"></div>
</body></html>
